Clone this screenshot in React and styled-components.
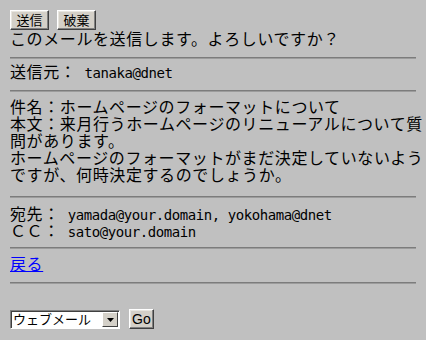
import React from "react";
import styled, { createGlobalStyle } from "styled-components";

const GlobalStyle = createGlobalStyle`
  html, body {
    margin: 0;
    padding: 0;
    background: #c0c0c0;
  }
  body {
    font-family: "Noto Sans CJK JP", "Noto Sans", sans-serif;
    color: #000;
  }
`;

const Page = styled.div`
  display: flex;
  flex-direction: column;
  padding: 10px 10px 0;
  width: 406px;
  font-size: 16px;
  line-height: 17px;
  letter-spacing: 0.6px;
  text-spacing-trim: space-all;
`;

const ButtonRow = styled.div`
  display: flex;
  gap: 8px;
  height: 20px;
`;

// 古いWindows風の立体ボタン
const OldButton = styled.button`
  box-sizing: border-box;
  height: ${(p) => p.$h || 20}px;
  min-width: ${(p) => p.$w || 39}px;
  padding: 0 ${(p) => p.$pad ?? 4}px;
  background: #d4d0c8;
  border: 1px solid;
  border-color: #ffffff #404040 #404040 #ffffff;
  box-shadow: inset -1px -1px 0 #808080, inset 1px 1px 0 #e8e6e0;
  font-family: ${(p) => (p.$latin ? `"Liberation Sans", sans-serif` : `"Noto Sans CJK JP", sans-serif`)};
  font-size: ${(p) => p.$fs || 13}px;
  line-height: 16px;
  letter-spacing: 0;
  color: #000;
`;

const Line = styled.div`
  height: 17px;
  white-space: nowrap;
`;

// 半角英数字は等幅で表示
const Mono = styled.span`
  font-family: "DejaVu Sans Mono", "Liberation Mono", monospace;
  font-size: 14px;
  line-height: 14px;
  letter-spacing: -0.43px;
`;

const Block = styled.div`
  margin-top: ${(p) => p.$gap || 0}px;
`;

const Rule = styled.div`
  margin-top: ${(p) => p.$gap || 10}px;
  height: 0;
  border-top: 1px solid #7c7c7c;
  border-bottom: 1px solid #9c9c9c;
`;

const Back = styled.a`
  color: #0000ff;
  text-decoration: underline;
  cursor: pointer;
`;

const FormRow = styled.div`
  display: flex;
  align-items: center;
  gap: 9px;
  margin-top: 24px;
`;

const SelectBox = styled.div`
  box-sizing: border-box;
  display: flex;
  align-items: stretch;
  width: 110px;
  height: 19px;
  margin-top: 2px;
  background: #fff;
  border: 1px solid;
  border-color: #808080 #ffffff #ffffff #808080;
  box-shadow: inset 1px 1px 0 #404040;
`;

const SelectLabel = styled.span`
  flex: 1;
  padding: 0 0 0 2px;
  font-size: 13px;
  line-height: 16px;
  letter-spacing: 0;
  color: #000;
`;

const ArrowBtn = styled.span`
  box-sizing: border-box;
  display: flex;
  align-items: center;
  justify-content: center;
  width: 16px;
  margin: 1px 1px 1px 0;
  background: #d4d0c8;
  border: 1px solid;
  border-color: #ffffff #404040 #404040 #ffffff;
`;

const Arrow = () => (
  <svg width="7" height="4" viewBox="0 0 7 4">
    <path d="M0 0h7L3.5 4z" fill="#000" />
  </svg>
);

export default function App() {
  return (
    <>
      <GlobalStyle />
      <Page>
        <ButtonRow>
          <OldButton>送信</OldButton>
          <OldButton>破棄</OldButton>
        </ButtonRow>
        <Line>このメールを送信します。よろしいですか？</Line>

        <Rule $gap={10} />
        <Block $gap={4}>
          <Line>
            送信元：<Mono> tanaka@dnet</Mono>
          </Line>
        </Block>

        <Rule $gap={10} />
        <Block $gap={6}>
          <Line>件名：ホームページのフォーマットについて</Line>
          <Line>本文：来月行うホームページのリニューアルについて質</Line>
          <Line>問があります。</Line>
          <Line>ホームページのフォーマットがまだ決定していないよう</Line>
          <Line>ですが、何時決定するのでしょうか。</Line>
        </Block>

        <Rule $gap={13} />
        <Block $gap={7}>
          <Line>
            宛先：<Mono> yamada@your.domain, yokohama@dnet</Mono>
          </Line>
          <Line>
            ＣＣ：<Mono> sato@your.domain</Mono>
          </Line>
        </Block>

        <Rule $gap={8} />
        <Block $gap={6}>
          <Line>
            <Back>戻る</Back>
          </Line>
        </Block>

        <Rule $gap={10} />
        <FormRow>
          <SelectBox>
            <SelectLabel>ウェブメール</SelectLabel>
            <ArrowBtn>
              <Arrow />
            </ArrowBtn>
          </SelectBox>
          <OldButton $w={22} $h={20} $pad={2} $fs={14} $latin>
            Go
          </OldButton>
        </FormRow>
      </Page>
    </>
  );
}
